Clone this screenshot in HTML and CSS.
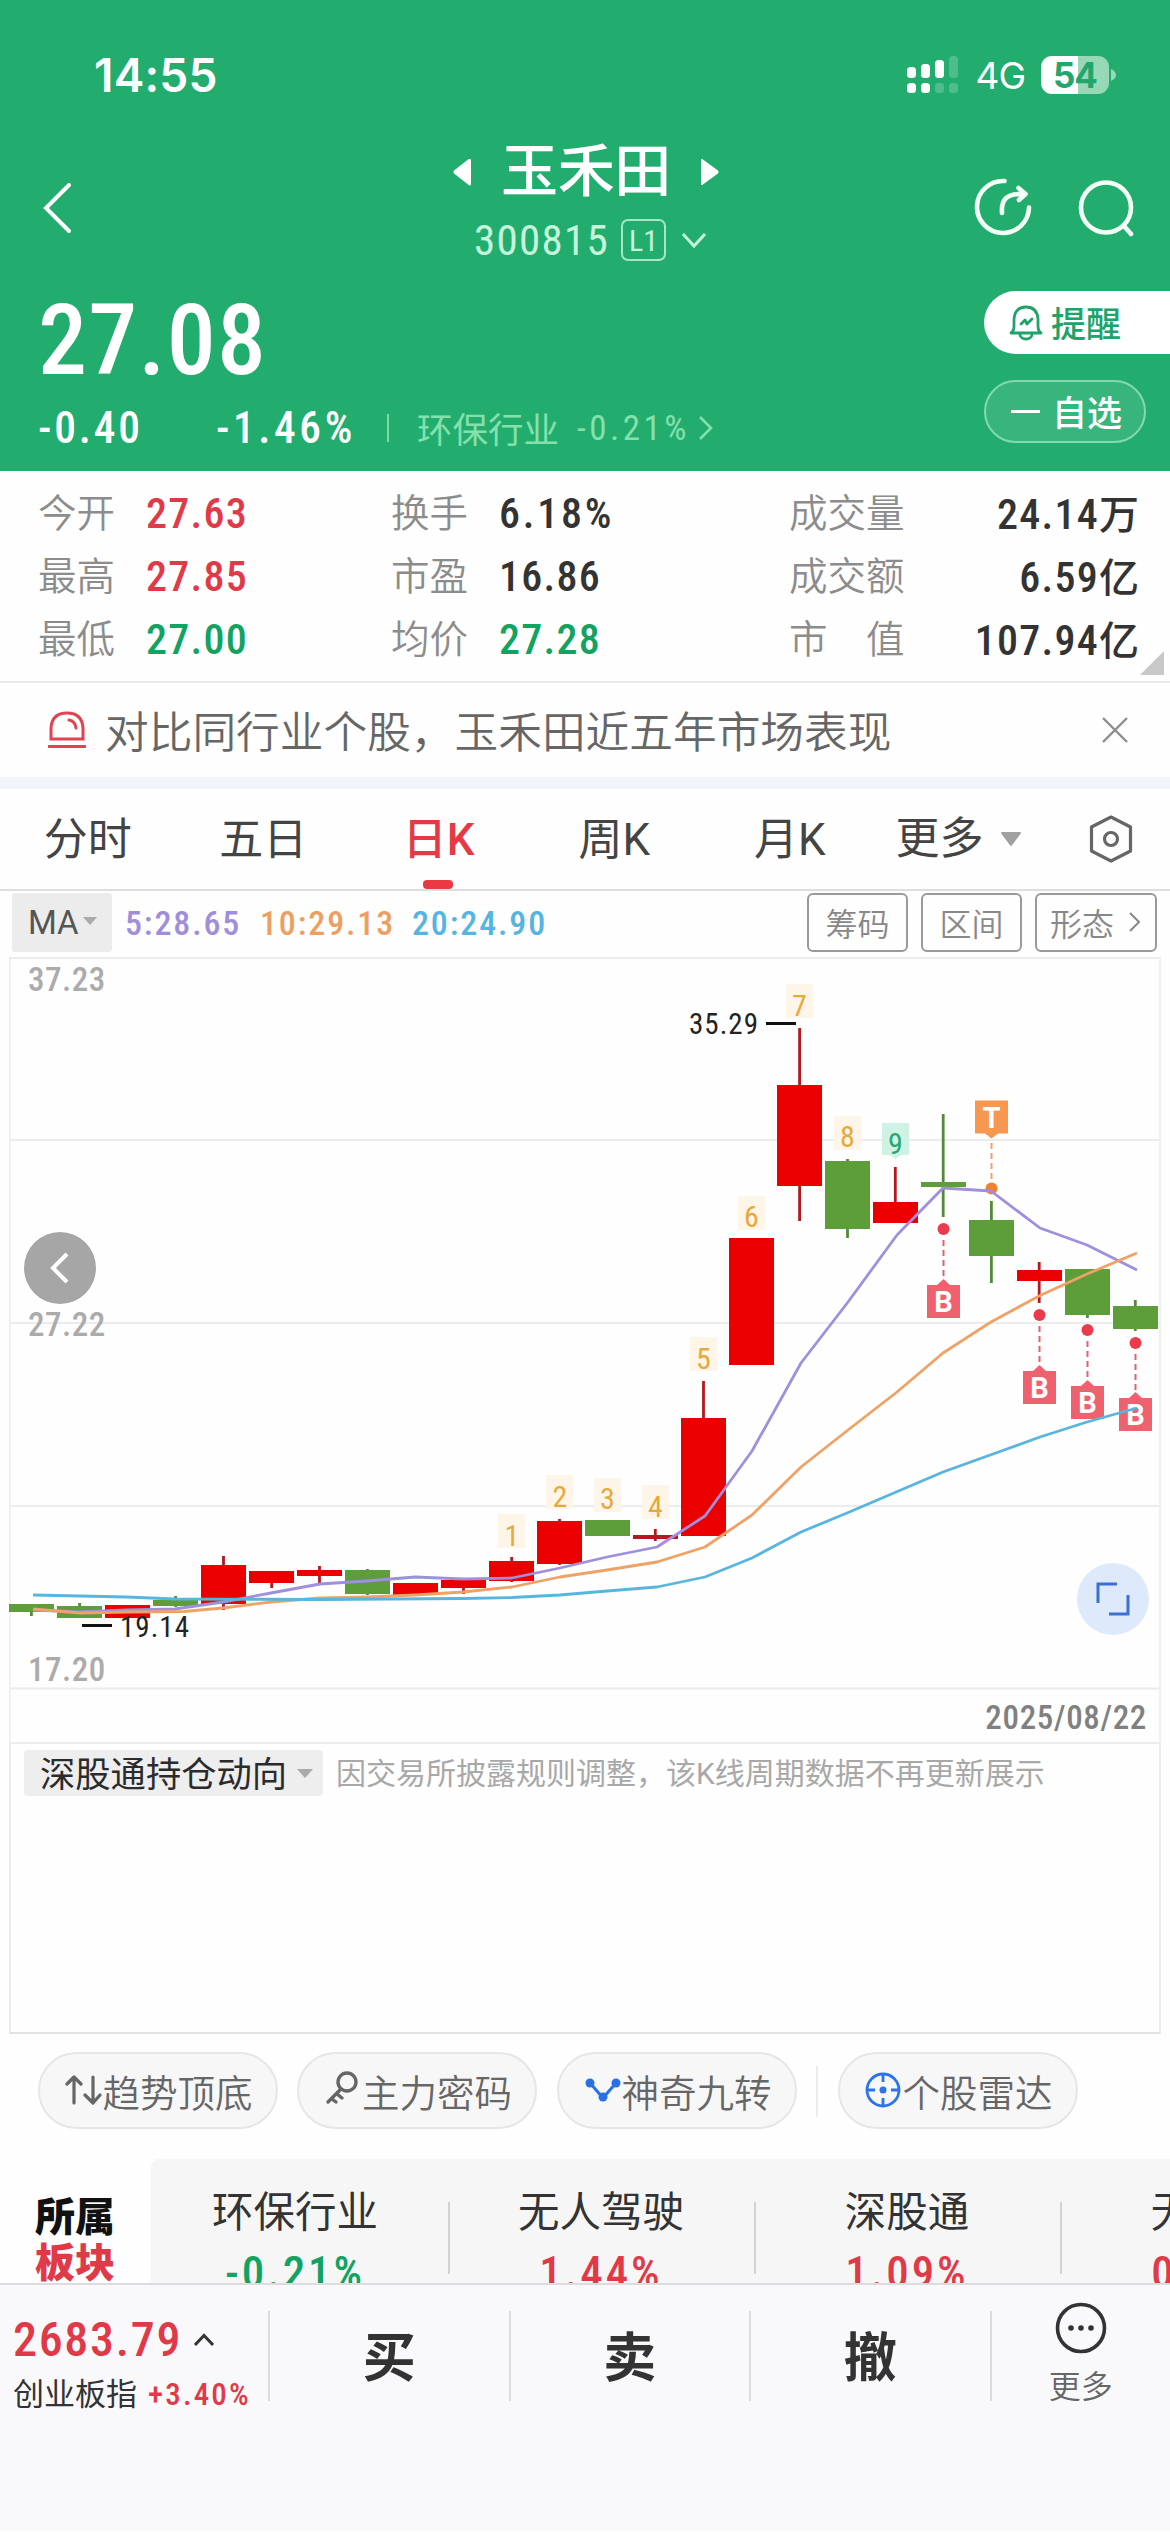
FILE: index.html
```html
<!DOCTYPE html>
<html lang="zh-CN">
<head>
<meta charset="utf-8">
<title>玉禾田 300815</title>
<link rel="stylesheet" href="styles.css">
</head>
<body>
<div class="app">
  <header class="header">
    <div class="status">
      <span class="clock">14:55</span>
      <svg class="signal" width="54" height="38" viewBox="0 0 54 38" fill="#fff">
        <rect x="0" y="11" width="9" height="11" rx="3.5"/><rect x="14" y="8" width="9" height="14" rx="3.5"/><rect x="28" y="4" width="9" height="18" rx="3.5"/><rect x="42" y="0" width="9" height="22" rx="3.5" opacity=".2"/>
        <rect x="0" y="27" width="9" height="10" rx="3.5"/><rect x="14" y="27" width="9" height="10" rx="3.5"/><rect x="28" y="27" width="9" height="10" rx="3.5" opacity=".2"/><rect x="42" y="27" width="9" height="10" rx="3.5" opacity=".2"/>
      </svg>
      <span class="net">4G</span>
      <span class="battery">54</span>
      <svg class="nub" width="5" height="12" viewBox="0 0 5 12"><path d="M0 0Q5 2.500 5 6T0 12Z" fill="#97d9b7"/></svg>
    </div>
    <nav class="nav">
      <svg class="back" width="30" height="52" viewBox="0 0 30 52"><path d="M26 3 3 26 26 49" fill="none" stroke="#fff" stroke-width="4" stroke-linecap="round"/></svg>
      <div class="title-col">
        <div class="title">
          <svg width="20" height="28" viewBox="0 0 20 28"><path d="M17 2V26Q17 27 16 26L2 15Q1 14 2 13L16 2Z" fill="#fff" stroke="#fff" stroke-width="2" stroke-linejoin="round"/></svg>
          <h1>玉禾田</h1>
          <svg width="20" height="28" viewBox="0 0 20 28"><path d="M3 2V26L18 15Q19 14 18 13Z" fill="#fff" stroke="#fff" stroke-width="2" stroke-linejoin="round"/></svg>
        </div>
        <div class="code">
          <span>300815</span><span class="level">L1</span>
          <svg width="26" height="18" viewBox="0 0 26 18"><path d="M2 3 13 15 24 3" fill="none" stroke="#c5f5da" stroke-width="3"/></svg>
        </div>
      </div>
      <div class="actions">
        <svg width="60" height="60" viewBox="0 0 60 60" fill="none" stroke="#f2fff7" stroke-width="4.600" stroke-linecap="round" stroke-linejoin="round"><path d="M31.500 4A26 26 0 1 0 56 30.500"/><path d="M29 36C28 23 33 16 51 17M45.500 11 52.500 17 46 23"/></svg>
        <svg width="60" height="60" viewBox="0 0 60 60" fill="none" stroke="#f2fff7" stroke-width="4.600" stroke-linecap="round"><circle cx="31" cy="30.500" r="25"/><path d="M49 49 56 57"/></svg>
      </div>
    </nav>
    <section class="quote">
      <div class="quote-main">
        <div class="price">27.08</div>
        <div class="change">
          <span class="chg">-0.40</span><span class="pct">-1.46%</span><i class="bar"></i>
          <span class="ind">环保行业</span><span class="ind-pct">-0.21%</span>
          <svg width="18" height="26" viewBox="0 0 18 26"><path d="M3 2 14 13 3 24" fill="none" stroke="#85e0ad" stroke-width="2.500"/></svg>
        </div>
      </div>
      <div class="quote-btns">
        <button class="pill alert">
          <svg width="34" height="36" viewBox="0 0 34 36" fill="none" stroke="#21a26a" stroke-width="2.800" stroke-linecap="round" stroke-linejoin="round"><path d="M2 28Q5 26 5 21V14Q6 2 17 2T29 14V21Q29 26 32 28Z"/><path d="M11 30Q12 34 17 34T23 30M12 19 16 15 18 19 23 14"/></svg>
          <span>提醒</span>
        </button>
        <button class="pill fav"><i class="minus"></i><span>自选</span></button>
      </div>
    </section>
  </header>

  <section class="stats">
    <div><label>今开</label><b class="up">27.63</b></div>
    <div><label>换手</label><b class="rate">6.18%</b></div>
    <div class="wide"><label>成交量</label><b>24.14<small>万</small></b></div>
    <div><label>最高</label><b class="up">27.85</b></div>
    <div><label>市盈</label><b>16.86</b></div>
    <div class="wide"><label>成交额</label><b>6.59<small>亿</small></b></div>
    <div><label>最低</label><b class="down">27.00</b></div>
    <div><label>均价</label><b class="down">27.28</b></div>
    <div class="wide"><label>市　值</label><b>107.94<small>亿</small></b></div>
    <i class="corner"></i>
  </section>

  <section class="notice">
    <svg width="38" height="38" viewBox="0 0 38 38" fill="none" stroke="#e04452" stroke-width="3"><path d="M3 28V17Q4 2 19 2T35 17V28Z"/><path d="M1 35.500H37M21 9Q27 10 28 17" stroke-linecap="round"/></svg>
    <p>对比同行业个股，玉禾田近五年市场表现</p>
    <svg class="close" width="28" height="28" viewBox="0 0 28 28"><path d="M2 2 26 26M26 2 2 26" stroke="#8c8c8c" stroke-width="2.400"/></svg>
  </section>

  <nav class="tabs">
    <a>分时</a><a>五日</a><a class="on">日K</a><a>周K</a><a>月K</a>
    <span class="more">更多</span>
    <svg width="22" height="16" viewBox="0 0 22 16"><path d="M2 2H20L11 14Z" fill="#a0a0a0" stroke="#a0a0a0" stroke-width="2" stroke-linejoin="round"/></svg>
    <svg class="hex" width="46" height="48" viewBox="0 0 46 48" fill="none" stroke="#666" stroke-width="3.200" stroke-linejoin="round"><path d="M23 2 42.500 12V36L23 46 3.500 36V12Z"/><circle cx="23" cy="24" r="6.500"/></svg>
  </nav>

  <section class="ma">
    <div class="ma-box">MA<svg width="16" height="10" viewBox="0 0 16 10"><path d="M1 1H15L8 9Z" fill="#aaa"/></svg></div>
    <span class="m5">5:28.65</span><span class="m10">10:29.13</span><span class="m20">20:24.90</span>
    <div class="tools"><a>筹码</a><a>区间</a><a>形态<svg width="14" height="24" viewBox="0 0 14 24"><path d="M2 3 11 12 2 21" fill="none" stroke="#888" stroke-width="2"/></svg></a></div>
  </section>

  <section class="chart">
    <svg width="1170" height="786" viewBox="0 957 1170 786">
      <g stroke="#ececec" stroke-width="2"><path d="M9 958H1161M10 1140H1160M10 1323H1160M10 1506H1160M10 1688.500H1160"/><path d="M10 958V1743M1160 958V1743" stroke-width="1.500"/></g>
      <g class="axis"><text x="28" y="991">37.23</text><text x="28" y="1336">27.22</text><text x="28" y="1681">17.20</text></g>
      <text class="date" x="1147" y="1729" text-anchor="end">2025/08/22</text>

      <g class="tag" text-anchor="middle">
        <rect x="498" y="1514" width="27" height="34"/><rect x="546" y="1475" width="27" height="34"/><rect x="594" y="1478" width="27" height="34"/><rect x="642" y="1485" width="27" height="34"/><rect x="690" y="1337" width="27" height="34"/><rect x="738" y="1196" width="27" height="34"/><rect x="786" y="984" width="27" height="34"/><rect x="834" y="1116" width="27" height="34"/><path d="M882 1123H909V1155H901L895.500 1159 890 1155H882Z" fill="#d0f2e4"/>
        <text x="512" y="1546">1</text><text x="560" y="1507">2</text><text x="607.500" y="1509">3</text><text x="655.500" y="1517">4</text><text x="703.500" y="1369">5</text><text x="751.500" y="1227">6</text><text x="799.500" y="1016">7</text><text x="847.500" y="1147">8</text><text x="895.500" y="1154" class="nine">9</text>
      </g>

      <g stroke="#b4181f" stroke-width="2.800">
        <path d="M223.500 1556V1610M271.700 1571V1588M319.500 1566V1583M463.500 1580V1594M511.700 1557V1582M559.500 1519V1565M655.300 1529V1541M703.500 1381V1420M799.600 1028V1221M895.300 1167V1205M1039.200 1262V1303"/>
      </g>
      <g stroke="#558a3a" stroke-width="2.800">
        <path d="M31.400 1604V1616M79.600 1603V1618M175.600 1596V1607M367.400 1569V1595M847.500 1159V1238M943.200 1114V1217M991.400 1201V1283M1087.400 1269V1318M1135.300 1300V1331"/>
      </g>
      <g fill="#eb0000">
        <path d="M105 1605h45v13h-45zM201 1565h45v39h-45zM249 1571h45v12h-45zM297 1570h45v6h-45zM393 1583h45v12h-45zM441 1580h45v8h-45zM489 1561h45v20h-45zM537 1521h45v43h-45zM681 1418h45v118h-45zM729 1238h45v127h-45zM777 1085h45v101h-45zM873 1202h45v21h-45zM1017 1270h45v11h-45z"/>
        <path d="M633 1535h45v4h-45z" fill="#b4181f"/>
      </g>
      <g fill="#5d9e3a">
        <path d="M9 1604h45v8h-45zM57 1606h45v12h-45zM153 1600h45v6h-45zM345 1570h45v24h-45zM585 1520h45v16h-45zM825 1161h45v68h-45zM921 1182h45v5h-45zM969 1220h45v36h-45zM1065 1269h45v46h-45zM1113 1306h45v23h-45z"/>
      </g>

      <g class="signals">
        <g fill="#ea3a4c"><circle cx="943.500" cy="1229" r="6"/><circle cx="1039.500" cy="1315" r="6"/><circle cx="1087.500" cy="1330" r="6"/><circle cx="1135.500" cy="1343" r="6"/></g>
        <path d="M943.500 1240V1278M1039.500 1326V1364M1087.500 1341V1379M1135.500 1354V1392" stroke="#e0606f" stroke-width="2" stroke-dasharray="6 4"/>
        <g fill="#f0616f"><path d="M927 1285h10l6.500-6 6.500 6h10v33h-33z"/><path d="M1023 1371h10l6.500-6 6.500 6h10v33h-33z"/><path d="M1071 1386h10l6.500-6 6.500 6h10v33h-33z"/><path d="M1119 1398h10l6.500-6 6.500 6h10v33h-33z"/></g>
        <path d="M991.500 1143V1180" stroke="#f0a070" stroke-width="2" stroke-dasharray="6 4"/>
        <circle cx="991.500" cy="1188.500" r="6" fill="#f28030"/>
        <path d="M975 1100.500h33v33h-10l-6.500 5-6.500-5h-10z" fill="#f79850"/>
        <g class="letter" text-anchor="middle"><text x="991.500" y="1128">T</text><text x="943.500" y="1312">B</text><text x="1039.500" y="1398">B</text><text x="1087.500" y="1413">B</text><text x="1135.500" y="1425">B</text></g>
      </g>

      <g fill="none" stroke-width="2.800" stroke-linejoin="round">
        <path stroke="#9f8fdc" d="M33 1610 80 1612 127 1610 175 1609 223 1602 271 1593 320 1584 367 1581 415 1577 463 1579 512 1578 560 1568 607 1557 657 1547 705 1516 752 1451 801 1363 848 1302 897 1235 943 1188 991 1191 1040 1228 1087 1245 1137 1270"/>
        <path stroke="#eea266" d="M33 1609 80 1613 127 1612 184 1611.500 223 1608 271 1602 320 1598 367 1597 415 1595 463 1592 512 1587 560 1577 607 1570 657 1562 705 1547 752 1515 801 1467 848 1430 897 1392 943 1353 991 1322 1039 1296 1087 1274 1137 1253"/>
        <path stroke="#58b5de" d="M33 1595 127 1597 175 1599 320 1599.500 463 1598.500 512 1597.500 560 1595 607 1591 657 1587 705 1577 752 1558 801 1532 847 1513 943 1472 1040 1437 1087 1422 1137 1408"/>
      </g>
      <path d="M766 1023.500H796M82 1625.500H112" stroke="#111" stroke-width="3"/>
      <g class="mark"><text x="689" y="1034">35.29</text><text x="120" y="1637">19.14</text></g>
    </svg>
    <button class="prev"><svg width="24" height="36" viewBox="0 0 24 36"><path d="M19 4 5 18 19 32" fill="none" stroke="#fff" stroke-width="4"/></svg></button>
    <button class="full"><svg width="36" height="36" viewBox="0 0 36 36"><path d="M3 22V3H22M33 14V33H14" fill="none" stroke="#3a70d4" stroke-width="3"/></svg></button>
  </section>

  <section class="sub">
    <div class="sub-sel"><span>深股通持仓动向</span><svg width="16" height="10" viewBox="0 0 16 10"><path d="M0 1H16L8 10Z" fill="#aaa"/></svg></div>
    <p>因交易所披露规则调整，该K线周期数据不再更新展示</p>
  </section>

  <section class="chips">
    <a><svg width="38" height="40" viewBox="0 0 38 40" fill="none" stroke="#666" stroke-width="3.200" stroke-linecap="round" stroke-linejoin="round"><path d="M9 33V8M2 14 9 7 16 14M28 7V32M20 25 28 33 35 25"/></svg>趋势顶底</a>
    <a><svg width="38" height="40" viewBox="0 0 38 40" fill="none" stroke="#666" stroke-width="3.400" stroke-linecap="round"><circle cx="23" cy="12" r="9"/><path d="M17 19 4 32M13 24 18 28M8 29 12 32"/></svg>主力密码</a>
    <a><svg width="38" height="40" viewBox="0 0 38 40"><path d="M6 13 19 28 32 13" fill="none" stroke="#2a6fe6" stroke-width="3"/><g fill="#2a6fe6"><circle cx="6" cy="13" r="4.500"/><circle cx="19" cy="27" r="4.500"/><circle cx="32" cy="13" r="4.500"/></g></svg>神奇九转</a>
    <i></i>
    <a><svg width="38" height="40" viewBox="0 0 38 40" fill="none" stroke="#2f73ea" stroke-width="2.800"><circle cx="18" cy="20" r="16"/><path d="M18 4V12M18 28V36M2 20H10M26 20H34"/><circle cx="18" cy="20" r="3.500" fill="#2f73ea" stroke="none"/></svg>个股雷达</a>
  </section>

  <section class="sectors">
    <div class="sec-title"><span>所属</span><span class="r">板块</span></div>
    <div class="sec-list">
      <div><span>环保行业</span><b class="down">-0.21%</b></div>
      <div><span>无人驾驶</span><b class="up">1.44%</b></div>
      <div><span>深股通</span><b class="up">1.09%</b></div>
      <div><span>无人机</span><b class="up">0.95%</b></div>
    </div>
  </section>

  <footer class="bottom">
    <div class="index">
      <div class="idx-val">2683.79<svg width="22" height="14" viewBox="0 0 22 14"><path d="M2 12 11 2.500 20 12" fill="none" stroke="#333" stroke-width="3"/></svg></div>
      <div class="idx-name">创业板指<b>+3.40%</b></div>
    </div>
    <a class="trade">买</a><a class="trade">卖</a><a class="trade">撤</a>
    <a class="more-btn">
      <svg width="52" height="52" viewBox="0 0 52 52"><circle cx="26" cy="26" r="23.500" fill="none" stroke="#333" stroke-width="3.600"/><g fill="#333"><circle cx="16" cy="26" r="2.800"/><circle cx="26" cy="26" r="2.800"/><circle cx="36" cy="26" r="2.800"/></g></svg>
      <span>更多</span>
    </a>
  </footer>
</div>
</body>
</html>
```
FILE: styles.css
```css
* { box-sizing: border-box; margin: 0; padding: 0; }
body { background: #fff; font-family: Roboto, "Noto Sans CJK SC", sans-serif; color: #333; }
svg { display: block; flex: none; }
button { border: 0; font: inherit; }
i { display: block; }
.app { width: 1170px; height: 2532px; overflow: hidden; display: flex; flex-direction: column; background: #fefefe; }
.app > * { flex: none; }
.price, .change, .code, .stats b, .ma, .sec-list b, .idx-val, .idx-name b, .chart text {
  font-family: "Roboto Condensed", Roboto, "Noto Sans CJK SC", sans-serif; letter-spacing: .035em;
}
.up { color: #e03a49; }
.down { color: #12a262; }

/* header */
.header { height: 471px; background: #22ad6f; color: #fff; }
.status { height: 112px; padding: 38px 54px 0 94px; display: flex; align-items: center; font-family: Inter, sans-serif; }
.clock { font-size: 46px; font-weight: 600; margin-right: auto; letter-spacing: .2px; }
.signal { margin-right: 14px; }
.net { font-size: 37px; font-weight: 400; margin-right: 16px; letter-spacing: -1px; }
.battery { width: 68px; height: 38px; border-radius: 11px; background: linear-gradient(90deg, #fff 54%, #97d9b7 54%); color: #22a66b; font-size: 35px; font-weight: 700; line-height: 38px; text-align: center; letter-spacing: -1px; }
.nub { margin-left: 2px; }
.nav { height: 168px; padding: 0 35px 0 43px; display: grid; grid-template-columns: 1fr auto 1fr; }
.back { margin-top: 70px; }
.title-col { padding-top: 22px; display: flex; flex-direction: column; align-items: center; }
.title { height: 76px; display: flex; align-items: center; gap: 28px; margin-right: 6px; }
.title h1 { font-size: 57px; font-weight: 500; line-height: 76px; letter-spacing: -.3px; }
.code { height: 60px; display: flex; align-items: center; font-size: 43px; color: #c5f5da; line-height: 60px; margin-left: 3px; letter-spacing: .03em; }
.level { margin: 0 15px 0 12px; width: 45px; height: 42px; border: 2px solid #a5e6c4; border-radius: 7px; font-size: 30px; line-height: 40px; text-align: center; letter-spacing: 0; }
.actions { display: flex; justify-content: flex-end; gap: 42px; padding-top: 65px; }
.quote { display: flex; justify-content: space-between; }
.quote-main { padding-left: 38px; }
.price { font-size: 98px; line-height: 118px; height: 118px; padding-top: 2px; letter-spacing: .012em; font-weight: 500; }
.change { display: flex; align-items: center; height: 60px; font-size: 43.500px; }
.chg { width: 178px; font-weight: 500; letter-spacing: .065em; }
.pct { width: 171px; font-weight: 500; letter-spacing: .082em; }
.bar { width: 2px; height: 28px; background: #7ed9a8; margin-right: 28px; }
.ind { font-size: 35.5px; color: #85e0ad; margin: -2px 18px 0 0; letter-spacing: 0; }
.ind-pct { font-size: 35px; color: #85e0ad; margin-right: 7px; letter-spacing: .1em; }
.quote-btns { padding-top: 11px; width: 186px; }
.pill { display: flex; align-items: center; height: 63px; color: #fff; font-size: 35px; font-weight: 500; }
.pill span { margin-top: -2px; }
.alert { width: 186px; padding-left: 25px; gap: 8px; background: #fff; color: #21a26a; border-radius: 32px 0 0 32px; }
.fav { margin-top: 26px; width: 162px; padding-left: 25px; gap: 12px; background: #38b57d; border: 2px solid #83d9ad; border-radius: 32px; }
.minus { width: 29px; height: 3px; background: #fff; }

/* stats */
.stats { height: 210px; padding: 9px 0 0 38px; display: grid; grid-template-columns: 353px 398px 350px; grid-auto-rows: 63px; position: relative; }
.stats div { display: flex; align-items: center; }
.stats label { font-size: 38.500px; color: #8c8c8c; font-weight: 350; margin: -3px 31px 0 0; white-space: pre; }
.stats b { font-size: 42px; font-weight: 500; letter-spacing: .03em; margin-top: 3px; }
.stats .rate { letter-spacing: .065em; }
.stats .wide b { margin-top: 0; }
.stats small { font-size: 40px; letter-spacing: 0; }
.wide { justify-content: space-between; }
.wide label { margin-right: 0; }
.corner { position: absolute; right: 6px; bottom: 6px; border-left: 24px solid transparent; border-bottom: 24px solid #c8c8c8; }

/* notice */
.notice { height: 108px; border-top: 2px solid #e9e9ea; border-bottom: 12px solid #f3f4fa; padding: 0 41px 0 48px; display: flex; align-items: center; }
.notice p { font-size: 43.700px; color: #666; margin: -2px 0 0 19px; font-weight: 350; }
.close { margin-left: auto; }

/* tabs */
.tabs { height: 102px; border-bottom: 2px solid #dedede; padding-left: 0; display: flex; align-items: center; font-size: 44px; color: #444; }
.tabs a { width: 175.500px; height: 100px; line-height: 102px; text-align: center; }
.on { color: #e63946; font-weight: 500; position: relative; }
.on::after { content: ""; position: absolute; left: 72px; bottom: 0; width: 30px; height: 9px; border-radius: 4px; background: #ea3943; }
.more { margin: 0 16px 0 18px; line-height: 102px; }
.hex { margin-left: 66px; }

/* indicator row */
.ma { height: 66px; padding: 2px 13px 5px 12px; display: flex; align-items: center; font-size: 34px; letter-spacing: .055em; }
.ma-box { width: 100px; height: 59px; background: #ececec; border-radius: 3px; display: flex; align-items: center; padding-left: 16px; gap: 3px; margin-right: 13px; color: #555; letter-spacing: 0; font-family: Roboto, sans-serif; font-size: 33px; }
.ma-box svg { margin-top: -3px; }
.m5, .m10, .m20 { font-weight: 500; }
.m5 { width: 135px; color: #a08ed8; }
.m10 { width: 152px; color: #eba062; }
.m20 { color: #55b4e0; }
.tools { margin-left: auto; display: flex; gap: 13px; letter-spacing: 0; }
.tools a { width: 101px; height: 59px; border: 2px solid #999; border-radius: 6px; display: flex; align-items: center; justify-content: center; font-size: 32px; color: #888; font-weight: 350; padding-bottom: 2px; }
.tools a:last-child { width: 122px; gap: 14px; }

/* chart */
.chart { position: relative; height: 785px; }
.chart .axis text { font-size: 33px; fill: #ababab; letter-spacing: .015em; font-weight: 500; }
.chart .date { font-size: 33px; fill: #808080; letter-spacing: .02em; font-weight: 500; }
.tag rect { fill: #fdf5e8; }
.chart .tag text { font-size: 30px; fill: #e6a93c; letter-spacing: 0; }
.chart .tag .nine { fill: #26a874; }
.chart .letter text { font-family: Roboto, sans-serif; font-size: 29px; font-weight: 700; fill: #fff; letter-spacing: 0; }
.chart .mark text { font-size: 29px; fill: #222; }
.prev, .full { position: absolute; width: 72px; height: 72px; border-radius: 50%; display: flex; align-items: center; justify-content: center; }
.prev { left: 24px; top: 275px; background: #a6a6a6; }
.full { right: 21px; top: 606px; background: #dee9fb; }

/* lower panel */
.sub { height: 292px; margin: 0 9px; border: 2px solid #ececec; border-bottom-color: #e2e2e2; padding: 6px 0 0 13px; display: flex; align-items: flex-start; }
.sub-sel { height: 46px; width: 299px; background: #eee; border-radius: 4px; padding-left: 16px; display: flex; align-items: center; gap: 10px; font-size: 35.300px; color: #2b2b2b; }
.sub-sel span { margin-top: -4px; }
.sub p { margin-left: 13px; font-size: 30px; line-height: 48px; color: #a8a8a8; }

/* chips */
.chips { padding: 18px 0 0 37.500px; height: 125px; display: flex; gap: 19.500px; }
.chips a { width: 240px; height: 77px; border: 2px solid #e6e6e7; border-radius: 39px; background: #f7f7f8; display: flex; align-items: center; padding: 0 0 1px 25px; font-size: 37.500px; color: #666; font-weight: 350; }
.chips i { width: 2px; height: 51px; margin: 14px 0 0; background: #ececec; }

/* sectors */
.sectors { height: 124px; display: flex; overflow: hidden; }
.sec-title { width: 151px; padding: 36px 0 0 35px; font-size: 40px; font-weight: 900; color: #111; display: flex; flex-direction: column; line-height: 46px; }
.sec-title .r { color: #e03a49; }
.sec-list { flex: 1; display: flex; background: #f6f6f7; border-radius: 8px 0 0 0; overflow: hidden; }
.sec-list div { flex: none; width: 306px; display: flex; flex-direction: column; align-items: center; position: relative; font-size: 41.500px; line-height: 50px; padding-top: 29px; }
.sec-list div:first-child { width: 297px; padding-right: 9px; }
.sec-list div + div::before { content: ""; position: absolute; left: 0; top: 43px; height: 72px; width: 2px; background: #d2d2d3; }
.sec-list b { font-size: 45px; font-weight: 500; line-height: 50px; margin-top: 10px; letter-spacing: .065em; }

/* bottom bar */
.bottom { height: 248px; background: #f9f9fb; border-top: 2px solid #dcdcde; display: flex; }
.index { width: 268px; padding: 26px 0 0 13px; }
.idx-val { display: flex; align-items: center; gap: 11px; font-size: 48px; line-height: 58px; color: #e03a49; font-weight: 500; }
.idx-name { font-size: 31px; line-height: 50px; white-space: nowrap; display: flex; margin-top: 1px; }
.idx-name b { color: #e03a49; font-weight: 500; font-size: 31px; margin-left: 11px; letter-spacing: .07em; }
.trade { width: 240.500px; height: 90px; margin-top: 26px; border-left: 2px solid #dcdcde; text-align: center; font-size: 53px; line-height: 97px; font-weight: 700; }
.more-btn { flex: 1; height: 90px; margin-top: 26px; border-left: 2px solid #dcdcde; display: flex; flex-direction: column; align-items: center; font-size: 32px; line-height: 44px; color: #666; font-weight: 350; }
.more-btn svg { margin-top: -9px; }
.more-btn span { margin-top: 11px; }
```
